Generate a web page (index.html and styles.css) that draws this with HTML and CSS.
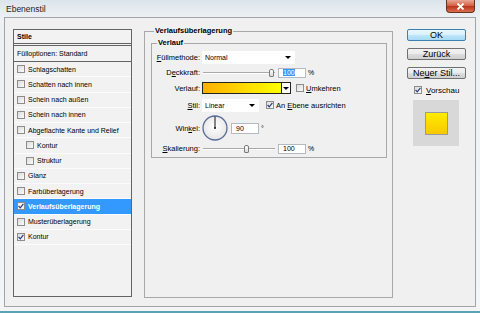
FILE: index.html
```html
<!DOCTYPE html>
<html lang="de">
<head>
    <meta charset="UTF-8">
    <title>Ebenenstil</title>
    <link rel="stylesheet" href="styles.css">
</head>
<body>
<div class="window">
    <div class="titlebar">
        <span class="title">Ebenenstil</span>
        <span class="close-btn">
            <svg width="9" height="7" viewBox="0 0 9 7"><path d="M1.5 0.5 L7.5 6.5 M7.5 0.5 L1.5 6.5" stroke="#fff" stroke-width="1.8"/></svg>
        </span>
    </div>

    <div class="client">
        <!-- Stile-Liste -->
        <div class="style-list">
            <div class="list-head">Stile</div>
            <div class="list-blend">Fülloptionen: Standard</div>
            <div class="list-row"><span class="cb"></span>Schlagschatten</div>
            <div class="list-row"><span class="cb"></span>Schatten nach innen</div>
            <div class="list-row"><span class="cb"></span>Schein nach außen</div>
            <div class="list-row"><span class="cb"></span>Schein nach innen</div>
            <div class="list-row"><span class="cb"></span>Abgeflachte Kante und Relief</div>
            <div class="list-row sub"><span class="cb"></span>Kontur</div>
            <div class="list-row sub"><span class="cb"></span>Struktur</div>
            <div class="list-row"><span class="cb"></span>Glanz</div>
            <div class="list-row"><span class="cb"></span>Farbüberlagerung</div>
            <div class="list-row selected"><span class="cb"><svg width="6" height="6" viewBox="0 0 6 6"><path d="M0.6 3 L2.3 4.9 L5.4 0.8" fill="none" stroke="#2c3f7c" stroke-width="1.2"/></svg></span>Verlaufsüberlagerung</div>
            <div class="list-row"><span class="cb"></span>Musterüberlagerung</div>
            <div class="list-row"><span class="cb"><svg width="6" height="6" viewBox="0 0 6 6"><path d="M0.6 3 L2.3 4.9 L5.4 0.8" fill="none" stroke="#2c3f7c" stroke-width="1.2"/></svg></span>Kontur</div>
        </div>

        <!-- Einstellungen -->
        <fieldset class="group outer">
            <legend>Verlaufsüberlagerung</legend>
            <fieldset class="group inner">
                <legend>Verlauf</legend>

                <div class="field f-mode">
                    <label><u>F</u>üllmethode:</label>
                    <div class="select wide"><span>Normal</span><span class="arrow"></span></div>
                </div>

                <div class="field f-opacity">
                    <label>D<u>e</u>ckkraft:</label>
                    <div class="slider"><span class="track"></span><span class="thumb" style="left: 96%"></span></div>
                    <div class="num"><span class="sel-text">100</span></div>
                    <span class="unit">%</span>
                </div>

                <div class="field f-gradient">
                    <label>Verlauf:</label>
                    <div class="gradient"><span class="gradient-fill"></span><span class="gradient-btn"><span class="arrow"></span></span></div>
                    <span class="cb gap-cb"></span>
                    <span class="cb-label"><u>U</u>mkehren</span>
                </div>

                <div class="field f-style">
                    <label><u>S</u>til:</label>
                    <div class="select narrow"><span>Linear</span><span class="arrow"></span></div>
                    <span class="cb gap-cb2"><svg width="6" height="6" viewBox="0 0 6 6"><path d="M0.6 3 L2.3 4.9 L5.4 0.8" fill="none" stroke="#2c3f7c" stroke-width="1.2"/></svg></span>
                    <span class="cb-label">An <u>E</u>bene ausrichten</span>
                </div>

                <div class="field f-angle">
                    <label>Win<u>k</u>el:</label>
                    <svg class="dial" width="26" height="26" viewBox="0 0 26 26">
                        <defs>
                            <radialGradient id="dialFill" cx="50%" cy="45%" r="55%">
                                <stop offset="0" stop-color="#ffffff"/>
                                <stop offset="1" stop-color="#e6e6e6"/>
                            </radialGradient>
                        </defs>
                        <circle cx="13" cy="13" r="12" fill="url(#dialFill)" stroke="#5a6d99" stroke-width="1.3"/>
                        <line x1="13" y1="13" x2="13" y2="1.5" stroke="#111" stroke-width="1"/>
                        <circle cx="13" cy="13" r="1" fill="#111"/>
                    </svg>
                    <div class="num angle">90</div>
                    <span class="unit">°</span>
                </div>

                <div class="field f-scale">
                    <label><u>S</u>kalierung:</label>
                    <div class="slider"><span class="track"></span><span class="thumb" style="left: 61%"></span></div>
                    <div class="num">100</div>
                    <span class="unit">%</span>
                </div>
            </fieldset>
        </fieldset>

        <!-- Buttons -->
        <div class="actions">
            <button class="btn default">OK</button>
            <button class="btn">Zurück</button>
            <button class="btn">Ne<u>u</u>er Stil...</button>
            <div class="preview-toggle">
                <span class="cb"><svg width="6" height="6" viewBox="0 0 6 6"><path d="M0.6 3 L2.3 4.9 L5.4 0.8" fill="none" stroke="#2c3f7c" stroke-width="1.2"/></svg></span>
                <span class="cb-label"><u>V</u>orschau</span>
            </div>
            <div class="preview"><span class="swatch"></span></div>
        </div>
    </div>
</div>
</body>
</html>
```

FILE: styles.css
```css
body {
    margin: 0;
    font-family: "Liberation Sans", Arial, sans-serif;
    font-size: 7px;
    color: #000;
    background: #eef1f4;
}
.window {
    width: 480px;
    height: 313px;
    box-sizing: border-box;
    background: linear-gradient(#dce4eb, #edf1f4 18px, #f3f5f7);
    border-bottom: 2px solid #5aa3b5;
}
.titlebar {
    height: 17px;
    display: flex;
    justify-content: space-between;
    align-items: flex-start;
}
.title {
    font-size: 8.5px;
    line-height: 11px;
    padding: 4px 0 0 6px;
    color: #1e1e1e;
}
.close-btn {
    width: 29px;
    height: 13px;
    margin-right: 5px;
    box-sizing: border-box;
    border: 1px solid #6b2f23;
    border-top: none;
    border-radius: 0 0 4px 4px;
    background: linear-gradient(#eaa795, #d35c42 50%, #b9331c 52%, #d9704e);
    display: flex;
    align-items: center;
    justify-content: center;
}
.client {
    margin: 0 4px;
    height: 290px;
    box-sizing: border-box;
    border: 1px solid #a3a3a3;
    background: #f0f0f0;
    display: flex;
    align-items: flex-start;
    padding: 8px 0 0 8px;
}

/* Stile-Liste */
.style-list {
    width: 119px;
    height: 268px;
    margin-top: 3px;
    box-sizing: border-box;
    border: 1px solid #646464;
    background: #f2f2f2;
    flex: none;
}
.list-head {
    height: 16px;
    line-height: 13px;
    box-sizing: border-box;
    padding-left: 3px;
    font-weight: bold;
    border-bottom: 3px double #646464;
}
.list-blend {
    height: 16px;
    line-height: 15px;
    box-sizing: border-box;
    padding-left: 3px;
    border-bottom: 1px solid #646464;
}
.list-row {
    height: 15.25px;
    box-sizing: border-box;
    border-bottom: 1px solid #fcfcfc;
    display: flex;
    align-items: center;
    padding-left: 3px;
}
.list-row.sub {
    padding-left: 12px;
}
.list-row.selected {
    background: #3399ff;
    color: #fff;
    font-weight: bold;
}
.cb {
    width: 8px;
    height: 8px;
    box-sizing: border-box;
    border: 1px solid #8c8c8c;
    background: linear-gradient(135deg, #dcdcdc, #fbfbfb);
    display: inline-flex;
    align-items: center;
    justify-content: center;
    flex: none;
    margin-right: 3px;
}
.list-row.selected .cb {
    background: #f4f4f4;
}

/* Gruppen */
.group {
    margin: 0;
    min-width: 0;
    box-sizing: border-box;
    border: 1px solid #a8a8a8;
}
.group legend {
    font-size: 7.5px;
    font-weight: bold;
    line-height: 8px;
    padding: 0 1px;
}
.outer {
    width: 249px;
    height: 271px;
    margin: 1px 0 0 12px;
    padding: 4px 5px 0 6px;
    flex: none;
}
.outer > legend {
    margin-left: 3px;
}
.inner {
    width: 236px;
    padding: 3px 4px 2px 3px;
}
.inner > legend {
    margin-left: 2px;
}
.field {
    display: flex;
    align-items: center;
    font-size: 7.5px;
}
.field label {
    width: 45px;
    margin-right: 2px;
    text-align: right;
    flex: none;
}
.f-mode { height: 15px; }
.f-opacity { height: 15px; }
.f-gradient { height: 16px; }
.f-style { height: 18px; }
.f-angle { height: 28px; }
.f-scale { height: 13px; }

.select {
    height: 13px;
    box-sizing: border-box;
    background: #fff;
    display: flex;
    align-items: center;
    justify-content: space-between;
    padding: 0 4px 0 3px;
    font-size: 7px;
}
.select.wide { width: 93px; }
.select.narrow { width: 57px; }
.arrow {
    width: 0;
    height: 0;
    border-left: 3px solid transparent;
    border-right: 3px solid transparent;
    border-top: 3px solid #000;
}

.slider {
    position: relative;
    width: 72px;
    height: 10px;
    margin-left: 1px;
    flex: none;
}
.track {
    position: absolute;
    left: 0;
    right: 0;
    top: 4px;
    height: 0;
    border-top: 1px solid #a9a9a9;
    border-bottom: 1px solid #ffffff;
}
.thumb {
    position: absolute;
    top: 1px;
    width: 5px;
    height: 8px;
    margin-left: -3px;
    box-sizing: border-box;
    border: 1px solid #7c7c7c;
    border-radius: 2px 2px 1px 1px;
    background: linear-gradient(#ffffff, #dadada);
}
.num {
    width: 28px;
    height: 10px;
    margin-left: 3px;
    box-sizing: border-box;
    border: 1px solid #b5b9c2;
    background: #fff;
    font-size: 7px;
    line-height: 8px;
    padding-left: 4px;
    flex: none;
}
.sel-text {
    background: #3399ff;
    color: #fff;
}
.num.angle {
    margin-left: 3px;
    height: 11px;
    line-height: 9px;
}
.unit {
    margin-left: 2px;
    font-size: 7px;
}

.gradient {
    display: flex;
    width: 89px;
    height: 12px;
    box-sizing: border-box;
    border: 1px solid #222;
}
.gradient-fill {
    flex: 1;
    background: linear-gradient(to right, #ffb000, #ffff00);
}
.gradient-btn {
    width: 8px;
    border-left: 1px solid #222;
    background: #fff;
    display: flex;
    align-items: center;
    justify-content: center;
}
.gap-cb {
    margin-left: 5px;
    margin-right: 2px;
}
.gap-cb2 {
    margin-left: 7px;
    margin-right: 2px;
}
.cb-label {
    font-size: 7.5px;
}
.dial {
    flex: none;
}

/* Buttons rechts */
.actions {
    width: 59px;
    margin-left: 14px;
    padding-top: 3px;
    display: flex;
    flex-direction: column;
    flex: none;
}
.btn {
    height: 12px;
    margin: 0 0 7px 0;
    padding: 0;
    box-sizing: border-box;
    border: 1px solid #707070;
    border-radius: 2px;
    background: linear-gradient(#f3f3f3, #ebebeb 50%, #dddddd 51%, #cfcfcf);
    font-family: "Liberation Sans", Arial, sans-serif;
    font-size: 9px;
    line-height: 10px;
    color: #000;
}
.btn.default {
    border-color: #3c7fb1;
    background: linear-gradient(#eaf6fd, #d9f0fc 50%, #bee6fd 51%, #a7d9f5);
}
.preview-toggle {
    height: 10px;
    margin-top: -1px;
    padding-left: 7px;
    display: flex;
    align-items: center;
    font-size: 8px;
}
.preview-toggle .cb-label {
    font-size: 8px;
    margin-left: 1px;
}
.preview {
    width: 46px;
    height: 46px;
    margin: 5px 0 0 6px;
    background: #d8d8d8;
    display: flex;
    align-items: center;
    justify-content: center;
}
.swatch {
    width: 23px;
    height: 23px;
    box-sizing: border-box;
    border: 1px solid #9a9a9a;
    background: linear-gradient(#ffec00, #f8c800);
}
```
